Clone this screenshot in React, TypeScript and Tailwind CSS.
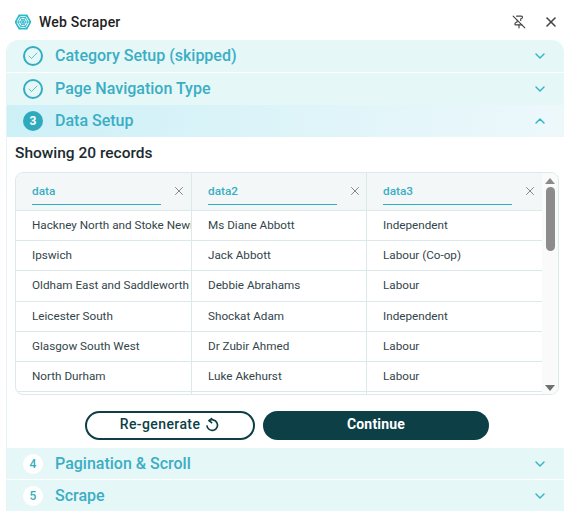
import React from 'react';
import { Check, ChevronDown, ChevronUp, PinOff, X } from 'lucide-react';

const rows = [
  ['Hackney North and Stoke Newington', 'Ms Diane Abbott', 'Independent'],
  ['Ipswich', 'Jack Abbott', 'Labour (Co-op)'],
  ['Oldham East and Saddleworth', 'Debbie Abrahams', 'Labour'],
  ['Leicester South', 'Shockat Adam', 'Independent'],
  ['Glasgow South West', 'Dr Zubir Ahmed', 'Labour'],
  ['North Durham', 'Luke Akehurst', 'Labour'],
  ['Liverpool Garston', 'Maria Eagle', 'Labour'],
];

const columns = [
  { name: 'data', width: 'w-[175px]' },
  { name: 'data2', width: 'w-[175px]' },
  { name: 'data3', width: 'w-[176px]' },
];

const WebLogo = () => (
  <svg width="16" height="16" viewBox="0 0 16 16" fill="none" stroke="#2db8cc" strokeWidth="1">
    <path d="M4.2 1.4h7.6L15.5 8l-3.7 6.6H4.2L.5 8z" strokeWidth="1.6" />
    <path d="M5.4 3.6h5.2L13 8l-2.4 4.4H5.4L3 8z" strokeWidth="1" />
    <path d="M6.6 5.7h2.8L10.7 8l-1.3 2.3H6.6L5.3 8z" strokeWidth="1" />
    <path d="M4.2 1.4l7.6 13.2M11.8 1.4L4.2 14.6M.5 8h15" strokeWidth="0.9" />
  </svg>
);

const ReplayIcon = () => (
  <svg width="16" height="16" viewBox="0 0 16 16" fill="none" stroke="#0d3f47" strokeWidth="1.6">
    <path d="M4.6 4.2A5.3 5.3 0 1 1 2.9 8.4" />
    <path d="M8.2 1.2 5 3.6l3.2 2.6" strokeLinejoin="round" />
  </svg>
);

const StepHeader = ({
  label,
  step,
  done,
  active,
  short,
}: {
  label: string;
  step?: number;
  done?: boolean;
  active?: boolean;
  short?: boolean;
}) => (
  <div
    className={`flex items-center pl-[16px] pr-[16px] ${short ? 'h-[31px]' : 'h-[32px]'} ${
      active ? 'bg-gradient-to-r from-[#cdf0f7] to-[#edf8fb]' : 'bg-[#e6f7f8]'
    }`}
  >
    {done ? (
      <span className="flex h-5 w-5 items-center justify-center rounded-full border-2 border-[#35adc0]">
        <Check className="h-3 w-3 text-[#35adc0]" strokeWidth={1.5} />
      </span>
    ) : (
      <span
        className={`flex h-5 w-5 items-center justify-center rounded-full text-[12px] ${
          active ? 'bg-[#2faabd] font-bold text-white' : 'bg-white font-medium text-[#35adc0]'
        }`}
      >
        {step}
      </span>
    )}
    <span className="ml-[12px] flex-1 text-[16px] font-medium text-[#3aaec4]">{label}</span>
    {active ? (
      <ChevronUp className="h-4 w-4 text-[#35b6c9]" strokeWidth={2.2} />
    ) : (
      <ChevronDown className="h-4 w-4 text-[#35b6c9]" strokeWidth={2.2} />
    )}
  </div>
);

const App: React.FC = () => {
  return (
    <div className="h-[511px] w-[564px] overflow-hidden bg-white font-['Roboto',sans-serif]">
      <div className="flex h-[40px] items-center pl-[15px] pr-[5px] pt-[3px]">
        <WebLogo />
        <span className="ml-[8px] flex-1 pt-[2px] text-[14px] font-medium tracking-[0.2px] text-[#222]">Web Scraper</span>
        <PinOff className="mr-[17px] h-[14px] w-[14px] text-[#444]" />
        <X className="h-[16px] w-[16px] text-[#444]" strokeWidth={2.4} />
      </div>

      <div className="ml-[6px] overflow-hidden rounded-t-[12px] border-l border-[#e8f3f6]">
        <div className="flex flex-col gap-px">
          <StepHeader label="Category Setup (skipped)" done />
          <StepHeader label="Page Navigation Type" done />
        </div>
        <StepHeader label="Data Setup" step={3} active />

        <div className="h-[311px] bg-white pl-[8px]">
          <div className="pt-[6px] text-[15.5px] font-medium leading-[20px] text-[#1c2b30]">Showing 20 records</div>

          <div className="mt-[9px] flex h-[223px] w-[544px] overflow-hidden rounded-[8px] border border-[#dce9ea]">
            <div className="w-[526px] overflow-hidden">
              <div className="flex h-[38px] border-b border-[#dce9ea] bg-[#f3f7f8]">
                {columns.map((col, i) => (
                  <div
                    key={col.name}
                    className={`flex h-full items-center pl-[16px] ${col.width} ${i > 0 ? 'border-l border-[#dce9ea]' : ''}`}
                  >
                    <div className="w-[129px] border-b border-[#2fb0c6] pb-[3px] pt-[3px] text-[11.8px] font-medium leading-[19px] text-[#3aaec4]">
                      {col.name}
                    </div>
                    <X className="mb-[2px] ml-[11px] h-[14px] w-[14px] text-[#777]" strokeWidth={1.5} />
                  </div>
                ))}
              </div>
              {rows.map((row) => (
                <div key={row[0]} className="flex h-[30.2px] border-b border-[#dce9ea]">
                  {row.map((cell, i) => (
                    <div
                      key={cell}
                      className={`overflow-hidden whitespace-nowrap pl-[16px] text-[11.7px] leading-[29.5px] text-[#33454b] ${columns[i].width} ${
                        i > 0 ? 'border-l border-[#dce9ea]' : ''
                      }`}
                    >
                      {cell}
                    </div>
                  ))}
                </div>
              ))}
            </div>
            <div className="flex w-[16px] flex-col items-center bg-[#fafafa] pt-[5px]">
              <div className="h-0 w-0 border-x-[5px] border-b-[6px] border-x-transparent border-b-[#8a8a8a]" />
              <div className="mt-[3px] h-[64px] w-[9px] rounded-[5px] bg-[#8c8c8c]" />
              <div className="mt-auto mb-[3px] h-0 w-0 border-x-[5px] border-t-[6px] border-x-transparent border-t-[#6f6f6f]" />
            </div>
          </div>

          <div className="mt-[16px] flex gap-[8px] pl-[70px]">
            <button className="flex h-[29px] w-[170px] items-center justify-center gap-[4px] rounded-full border-2 border-[#0d3f47] bg-white pb-[2px] text-[14px] font-medium tracking-[0.4px] text-[#0d3f47]">
              Re-generate
              <ReplayIcon />
            </button>
            <button className="h-[29px] w-[226px] rounded-full bg-[#0d3f47] pb-[2px] text-[14px] font-bold tracking-[0.2px] text-white">
              Continue
            </button>
          </div>
        </div>

        <div className="flex flex-col gap-px">
          <StepHeader label="Pagination & Scroll" step={4} short />
          <StepHeader label="Scrape" step={5} short />
        </div>
      </div>
    </div>
  );
};

export default App;
